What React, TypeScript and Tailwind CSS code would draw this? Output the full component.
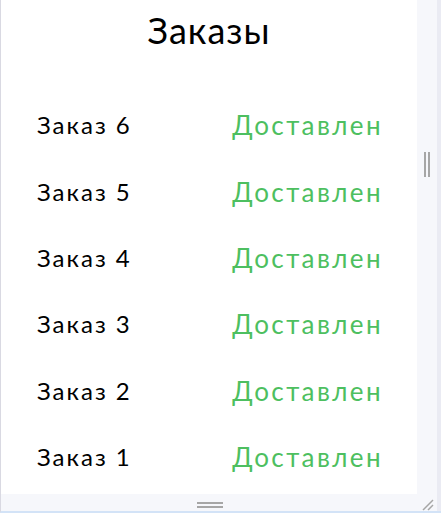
import React from "react";

const orders = [6, 5, 4, 3, 2, 1];

export default function App() {
  return (
    <div className="w-[441px] h-[517px] bg-white flex flex-col" style={{ fontFamily: "Lato, 'Noto Sans', sans-serif" }}>
      <div className="h-[513px] flex border-l border-[#d9d9e2] border-b-2 border-b-[#d3e3f7]">
        <div className="flex-1 flex flex-col">
          <div className="h-[494px] flex">
            <div className="flex-1 bg-white flex flex-col">
              <div className="h-[60px] flex items-center justify-center text-[36px] tracking-[1px] text-black">Заказы</div>
              <div className="flex flex-col pt-[32px] px-9">
                {orders.map((n) => (
                  <div key={n} className="h-[66.4px] flex items-center justify-between leading-none">
                    <span className="text-black text-[24px] tracking-[2px]">Заказ {n}</span>
                    <span className="text-[#4dbf60] text-[26px] tracking-[2.4px] mr-[-2px]">Доставлен</span>
                  </div>
                ))}
              </div>
            </div>
            <div className="w-[20px] bg-[#f6f7fb] relative">
              <div className="absolute left-[7px] top-[152px] flex gap-[2px]">
                <div className="w-[2px] h-[25px] bg-[#a6a6a6]" />
                <div className="w-[2px] h-[25px] bg-[#a6a6a6]" />
              </div>
            </div>
          </div>
          <div className="flex-1 bg-[#f6f7fb] relative">
            <div className="absolute left-[196px] top-[8px] w-[26px] flex flex-col gap-[2.5px]">
              <div className="h-[1.5px] bg-[#a6a6a6]" />
              <div className="h-[1.5px] bg-[#a6a6a6]" />
            </div>
            <svg className="absolute right-[2px] top-[4px]" width="14" height="14" viewBox="0 0 14 14">
              <line x1="2" y1="12" x2="12" y2="2" stroke="#a6a6a6" strokeWidth="1.5" />
              <line x1="7" y1="12" x2="12" y2="7" stroke="#a6a6a6" strokeWidth="1.5" />
            </svg>
          </div>
        </div>
        <div className="w-[4px] bg-[#eaebf3]" />
      </div>
    </div>
  );
}
